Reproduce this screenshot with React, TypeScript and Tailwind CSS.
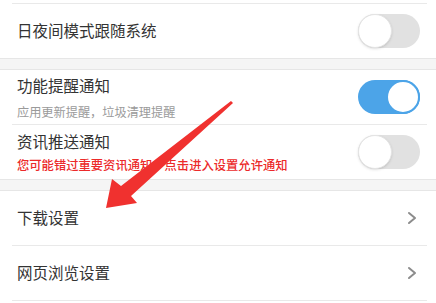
import React from 'react';

type ToggleProps = {
  on?: boolean;
};

function Toggle({ on }: ToggleProps) {
  return (
    <div
      className={
        on
          ? 'w-[62px] h-[34px] rounded-full bg-[#4ca4e8] flex items-center justify-end'
          : 'w-[62px] h-[34px] rounded-full bg-[#e1e1e1] flex items-center justify-start'
      }
    >
      <div
        className={
          on
            ? 'w-[34px] h-[34px] rounded-full bg-white border-2 border-[#4ca4e8]'
            : 'w-[34px] h-[34px] rounded-full bg-white border border-[#e4e4e4] shadow-sm'
        }
      />
    </div>
  );
}

function Chevron() {
  return (
    <svg width="10" height="14" viewBox="0 0 10 14" className="mr-[3px]">
      <polyline points="2,2 8,7 2,12" fill="none" stroke="#8c8c8c" strokeWidth="2" strokeLinecap="round" strokeLinejoin="round" />
    </svg>
  );
}

function Band() {
  return <div className="h-[12px] bg-[#f5f5f5] border-y border-[#e6e6e6]" />;
}

function Divider() {
  return <div className="mx-3 mr-[9px] border-t border-[#e9e9e9]" />;
}

export default function App() {
  const font = { fontFamily: '"Noto Sans CJK SC", "Noto Sans", sans-serif' };
  return (
    <div className="relative w-[436px] h-[303px] bg-white overflow-hidden" style={font}>
      <div className="h-[3px]" />
      <Divider />
      <div className="h-[54px] flex items-center justify-between pl-[17px] pr-[16px]">
        <span className="text-[15.5px] text-[#333333]">日夜间模式跟随系统</span>
        <Toggle />
      </div>
      <Band />
      <div className="h-[54px] flex items-center justify-between pl-[17px] pr-[16px]">
        <div className="flex flex-col">
          <span className="text-[15.5px] leading-[22px] text-[#333333]">功能提醒通知</span>
          <span className="text-[12.2px] leading-[18px] mt-[7px] text-[#9a9a9a]">应用更新提醒，垃圾清理提醒</span>
        </div>
        <Toggle on />
      </div>
      <Divider />
      <div className="h-[54px] flex items-center justify-between pl-[17px] pr-[16px]">
        <div className="flex flex-col -mt-[1px]">
          <span className="text-[15.5px] leading-[22px] text-[#333333]">资讯推送通知</span>
          <span className="text-[12.3px] leading-[18px] mt-[4px] font-medium text-[#ec2a2a]">您可能错过重要资讯通知，点击进入设置允许通知</span>
        </div>
        <Toggle />
      </div>
      <Band />
      <div className="h-[54px] flex items-center justify-between pl-[17px] pr-[16px]">
        <span className="text-[15.5px] text-[#333333]">下载设置</span>
        <Chevron />
      </div>
      <Divider />
      <div className="h-[54px] flex items-center justify-between pl-[17px] pr-[16px]">
        <span className="text-[15.5px] text-[#333333]">网页浏览设置</span>
        <Chevron />
      </div>
      <Divider />
      <svg className="absolute left-0 top-0 pointer-events-none" width="436" height="303" viewBox="0 0 436 303">
        <polygon
          points="231,101 233,103 131,196 137,203 106,208 112,179 121,186"
          fill="#f0312f"
        />
      </svg>
    </div>
  );
}
